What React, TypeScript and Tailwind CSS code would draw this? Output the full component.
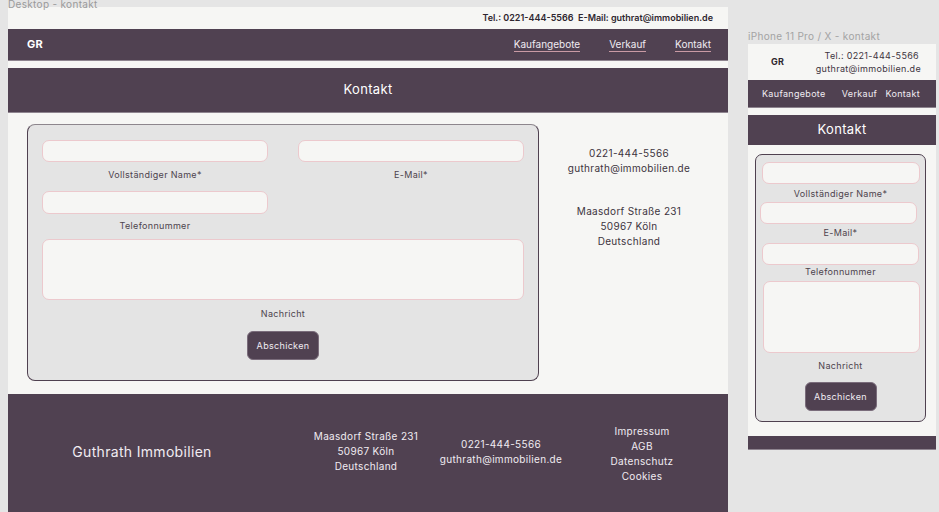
const font = { fontFamily: "Inter, 'Noto Sans', sans-serif" };

function Field({ className = "" }: { className?: string }) {
  return <div className={`h-[22px] rounded-[7px] border border-[#ecc9cd] bg-[#f6f6f4] ${className}`} />;
}

function Label({ children, className = "" }: { children: string; className?: string }) {
  return <div className={`text-center text-[9px] leading-[12px] text-[#4d434d] ${className}`}>{children}</div>;
}

function DesktopFrame() {
  return (
    <div className="relative w-[720px] shrink-0">
      <div className="absolute left-0 top-[-9px] text-[10px] leading-[12px] text-[#9a9a9a]">Desktop - kontakt</div>
      <div className="flex h-[22px] items-center justify-end bg-[#f6f6f4] pr-[15px] text-[9px] font-semibold tracking-normal text-[#2e262f]">
        Tel.: 0221-444-5566&nbsp;&nbsp;E-Mail: guthrat@immobilien.de
      </div>
      <div className="flex h-[32px] items-center justify-between border-b border-[#8e848f] bg-[#504151] pl-[19px] pr-[17px]">
        <span className="text-[11px] font-bold text-white">GR</span>
        <nav className="flex gap-[29px] text-[10px] tracking-normal text-[#f1ecf1]">
          {["Kaufangebote", "Verkauf", "Kontakt"].map((l) => (
            <span key={l} className="border-b border-[#c99aa4] pb-[1px] leading-[12px]">{l}</span>
          ))}
        </nav>
      </div>
      <div className="h-[7px] bg-[#f6f6f4]" />
      <div className="flex h-[45px] items-center justify-center border-b border-[#8e848f] bg-[#504151] text-[13px] text-white">Kontakt</div>
      <div className="flex h-[281px] bg-[#f6f6f4] pl-[19px] pt-[11px]">
        <div className="h-[257px] w-[512px] rounded-[8px] border border-[#4f4150] border-t-[#8d868d] bg-[#e4e4e4] px-[14px] pt-[15px]">
          <div className="grid grid-cols-2 gap-x-[30px]">
            <div>
              <Field />
              <Label className="mt-[7px]">Vollständiger Name*</Label>
            </div>
            <div>
              <Field />
              <Label className="mt-[7px]">E-Mail*</Label>
            </div>
            <div className="mt-[10px]">
              <Field className="h-[23px]" />
              <Label className="mt-[6px]">Telefonnummer</Label>
            </div>
          </div>
          <div className="mt-[7px] h-[61px] rounded-[7px] border border-[#ecc9cd] bg-[#f6f6f4]" />
          <Label className="mt-[8px]">Nachricht</Label>
          <div className="mt-[11px] flex justify-center">
            <button className="h-[29px] w-[72px] rounded-[6px] border border-[#7a6c7b] bg-[#504151] text-[9px] text-[#f1ecf1]">Abschicken</button>
          </div>
        </div>
        <div className="flex w-[180px] flex-col items-center pt-[22px] text-[10px] leading-[15px] text-[#3d343e]">
          <div>0221-444-5566</div>
          <div>guthrath@immobilien.de</div>
          <div className="mt-[28px]">Maasdorf Straße 231</div>
          <div>50967 Köln</div>
          <div>Deutschland</div>
        </div>
      </div>
      <footer className="flex h-[140px] bg-[#504151] text-[#f1ecf1]">
        <div className="flex w-[268px] items-center justify-center pb-[26px] text-[14px]">Guthrath Immobilien</div>
        <div className="flex w-[180px] flex-col items-center pt-[35px] text-[10px] leading-[15px]">
          <div>Maasdorf Straße 231</div>
          <div>50967 Köln</div>
          <div>Deutschland</div>
        </div>
        <div className="flex w-[90px] flex-col items-center pt-[43px] text-[10px] leading-[15px]">
          <div className="whitespace-nowrap">0221-444-5566</div>
          <div className="whitespace-nowrap">guthrath@immobilien.de</div>
        </div>
        <div className="flex flex-1 flex-col items-center pl-[10px] pt-[30px] text-[10px] leading-[15px]">
          <div>Impressum</div>
          <div>AGB</div>
          <div>Datenschutz</div>
          <div>Cookies</div>
        </div>
      </footer>
    </div>
  );
}

function MobileFrame() {
  return (
    <div className="w-[188px] shrink-0 pt-[23px]">
      <div className="mb-[2px] whitespace-nowrap text-[10px] leading-[12px] text-[#a3a3a3]">iPhone 11 Pro / X - kontakt</div>
      <div className="flex h-[36px] items-center justify-between bg-[#f6f6f4] pl-[23px] pr-[15px]">
        <span className="text-[9px] font-bold text-[#2e262f]">GR</span>
        <div className="text-right text-[9px] leading-[13px] text-[#3d343e]">
          <div className="pr-[2px]">Tel.: 0221-444-5566</div>
          <div>guthrat@immobilien.de</div>
        </div>
      </div>
      <div className="flex h-[28px] items-center justify-between border-b border-[#8e848f] bg-[#504151] pl-[14px] pr-[16px] text-[9px] text-[#f1ecf1]">
        <span>Kaufangebote</span>
        <span className="ml-[8px]">Verkauf</span>
        <span>Kontakt</span>
      </div>
      <div className="h-[7px] bg-[#f6f6f4]" />
      <div className="flex h-[30px] items-center justify-center bg-[#504151] text-[13px] text-white">Kontakt</div>
      <div className="h-[291px] bg-[#f6f6f4] pl-[7px] pt-[9px]">
        <div className="h-[268px] w-[171px] rounded-[7px] border border-[#4f4150] bg-[#e4e4e4] pt-[7px]">
          <Field className="ml-[6px] w-[158px]" />
          <Label className="mt-[4px]">Vollständiger Name*</Label>
          <Field className="ml-[4px] mt-[2px] w-[157px]" />
          <Label className="mt-[3px]">E-Mail*</Label>
          <Field className="ml-[6px] mt-[4px] w-[157px]" />
          <Label className="mt-[1px]">Telefonnummer</Label>
          <div className="ml-[7px] mt-[3px] h-[72px] w-[157px] rounded-[7px] border border-[#ecc9cd] bg-[#f6f6f4]" />
          <Label className="mt-[7px]">Nachricht</Label>
          <div className="mt-[10px] flex justify-center">
            <button className="h-[29px] w-[72px] rounded-[6px] border border-[#7a6c7b] bg-[#504151] text-[9px] text-[#f1ecf1]">Abschicken</button>
          </div>
        </div>
      </div>
      <div className="h-[14px] border-b border-[#8e848f] bg-[#504151]" />
    </div>
  );
}

export default function App() {
  return (
    <div className="flex h-[512px] w-[939px] gap-[20px] overflow-hidden bg-[#e5e5e5] pl-[8px] pt-[7px] tracking-[0.02em]" style={font}>
      <DesktopFrame />
      <MobileFrame />
    </div>
  );
}
